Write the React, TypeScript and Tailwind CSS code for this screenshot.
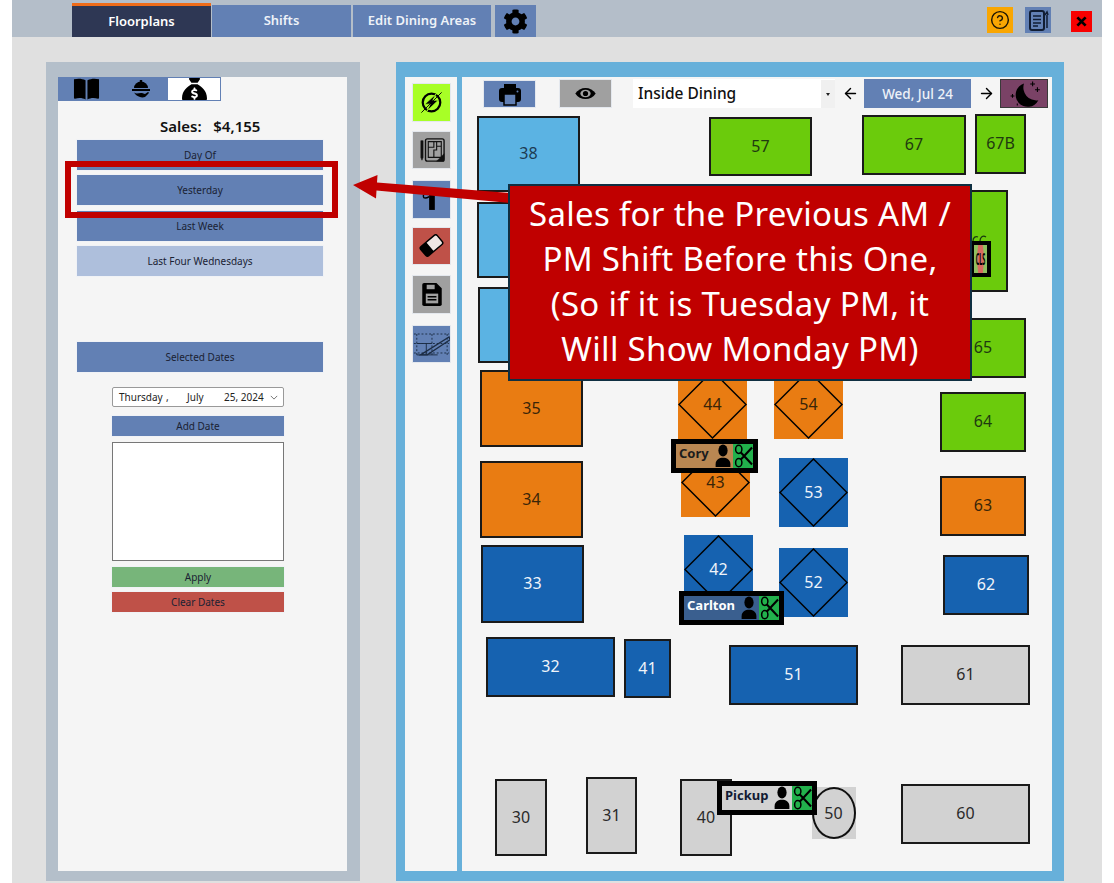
import React from "react";
import { FaCog } from "react-icons/fa";
import { FaSackDollar } from "react-icons/fa6";
import { ArrowLeft, ArrowRight, CircleHelp } from "lucide-react";

type T = { n: string; x: number; y: number; w: number; h: number; k: string; d?: boolean };
const colors: Record<string, string> = {
  sky: "bg-[#5bb3e3] text-[#1d3b52]",
  lime: "bg-[#6bcb0c] text-[#1f3a10]",
  orange: "bg-[#e97c12] text-[#3a2508]",
  blue: "bg-[#1662b0] text-[#f0f4fa]",
  gray: "bg-[#d2d2d2] text-[#2a2a2a]",
};
const tables: T[] = [
  { n: "38", x: 477, y: 116, w: 103, h: 76, k: "sky" },
  { n: "", x: 477, y: 202, w: 103, h: 76, k: "sky" },
  { n: "", x: 478, y: 287, w: 103, h: 76, k: "sky" },
  { n: "35", x: 480, y: 370, w: 103, h: 77, k: "orange" },
  { n: "34", x: 480, y: 461, w: 103, h: 77, k: "orange" },
  { n: "33", x: 481, y: 545, w: 103, h: 78, k: "blue" },
  { n: "32", x: 486, y: 637, w: 129, h: 60, k: "blue" },
  { n: "41", x: 624, y: 639, w: 47, h: 59, k: "blue" },
  { n: "57", x: 709, y: 117, w: 103, h: 59, k: "lime" },
  { n: "67", x: 862, y: 115, w: 104, h: 60, k: "lime" },
  { n: "67B", x: 975, y: 114, w: 51, h: 60, k: "lime" },
  { n: "66", x: 905, y: 190, w: 103, h: 102, k: "lime" },
  { n: "65", x: 940, y: 318, w: 86, h: 60, k: "lime" },
  { n: "64", x: 940, y: 392, w: 86, h: 60, k: "lime" },
  { n: "63", x: 940, y: 476, w: 86, h: 60, k: "orange" },
  { n: "62", x: 943, y: 555, w: 86, h: 60, k: "blue" },
  { n: "61", x: 901, y: 645, w: 129, h: 60, k: "gray" },
  { n: "60", x: 901, y: 784, w: 129, h: 60, k: "gray" },
  { n: "51", x: 729, y: 645, w: 129, h: 60, k: "blue" },
  { n: "30", x: 495, y: 779, w: 52, h: 77, k: "gray" },
  { n: "31", x: 586, y: 777, w: 51, h: 77, k: "gray" },
  { n: "40", x: 680, y: 779, w: 52, h: 77, k: "gray" },
  { n: "44", x: 678, y: 370, w: 69, h: 69, k: "orange", d: true },
  { n: "54", x: 774, y: 370, w: 69, h: 69, k: "orange", d: true },
  { n: "43", x: 681, y: 448, w: 69, h: 69, k: "orange", d: true },
  { n: "53", x: 779, y: 458, w: 69, h: 69, k: "blue", d: true },
  { n: "42", x: 684, y: 535, w: 69, h: 69, k: "blue", d: true },
  { n: "52", x: 779, y: 548, w: 69, h: 69, k: "blue", d: true },
];

function Bolt() {
  return (
    <svg viewBox="0 0 24 24" className="w-[27px] h-[27px]">
      <circle cx="12" cy="12" r="7.800" fill="none" stroke="#000" strokeWidth="2" />
      <path d="M16 4.500 6 13.500h4.800L8 19.500l10-9.500h-4.800z" fill="#000" stroke="#a8ff26" strokeWidth="0.700" />
      <path d="M3 21 21 3" stroke="#000" strokeWidth="0.800" />
    </svg>
  );
}
function Plan() {
  return (
    <svg viewBox="0 0 28 28" className="w-[26px] h-[26px]" fill="none" stroke="#111">
      <path d="M2 4v18l1.200 3 1.200-3V4z" fill="#111" strokeWidth="0.600" />
      <rect x="7" y="2" width="20" height="24" rx="2" strokeWidth="1.500" />
      <path d="M10 5h14v17H10zM16 5v6h-6M19 5v5h5M19 10v4h-3v8" strokeWidth="1.200" />
      <path d="M27 18v8h-8z" fill="#111" strokeWidth="0.500" />
    </svg>
  );
}
function Tie() {
  return (
    <svg viewBox="0 0 39 38" className="w-[37px] h-[37px]">
      <path d="M17 8h6v22h-6z" fill="#000" />
      <path d="M11 14v2c0 2 3 2 6 0" fill="none" stroke="#000" strokeWidth="1.500" />
    </svg>
  );
}
function Eraser() {
  return (
    <svg viewBox="0 0 28 24" className="w-[27px] h-[23px]">
      <g transform="rotate(-40 14 12)">
        <rect x="2" y="5" width="24" height="14" rx="3" fill="#000" />
        <path d="M12 6.500h11a1.500 1.500 0 0 1 1.500 1.500v8a1.500 1.500 0 0 1-1.500 1.500H12z" fill="#f0e6e4" />
      </g>
    </svg>
  );
}
function Floppy() {
  return (
    <svg viewBox="0 0 22 26" className="w-[20px] h-[23px]">
      <path d="M2 0h14l6 6v18a2 2 0 0 1-2 2H2a2 2 0 0 1-2-2V2a2 2 0 0 1 2-2z" fill="#000" />
      <rect x="5" y="2" width="9" height="5" fill="#a0a0a0" />
      <rect x="4" y="12" width="14" height="11" fill="#a0a0a0" />
      <path d="M6 15.500h10M6 19h10" stroke="#000" strokeWidth="1.800" />
    </svg>
  );
}
function Draw() {
  return (
    <svg viewBox="0 0 39 38" className="w-[37px] h-[37px]" fill="none" stroke="#1c2c44">
      <path d="M1 9h37M1 19h37M1 29h37M4 9v22M20 9v22M36 9v22" strokeWidth="1" strokeDasharray="2 2" />
      <path d="M4 19h16M4 31h22M14 19v12" strokeWidth="1" />
      <path d="M8 31 38 12l1 3-24 16z" strokeWidth="1.300" />
    </svg>
  );
}
function Notes() {
  return (
    <svg viewBox="0 0 24 24" className="w-[24px] h-[24px]" fill="none" stroke="#111d33">
      <rect x="4" y="3" width="14" height="19" rx="2" strokeWidth="2" />
      <path d="M7 8h8M7 11.500h8M7 15h8M7 18h5" strokeWidth="1.500" />
      <path d="M21 7v13M19 7l2-3 1 3" strokeWidth="1.500" />
    </svg>
  );
}
function Moon() {
  return (
    <svg viewBox="0 0 48 28" className="w-[48px] h-[28px]">
      <path d="M24 3a12.500 12.500 0 1 0 15 17.500A13.500 13.500 0 0 1 24 3z" fill="#000" />
      <path d="M33 1v5M30.500 3.500h5M38 7v5M35.500 9.500h5M12 14v4M10 16h4M17 24v2" stroke="#000" strokeWidth="1.100" />
    </svg>
  );
}
function Printer() {
  return (
    <svg viewBox="0 0 24 24" className="w-[24px] h-[24px]">
      <path d="M6 2h12v5H6z" fill="#000" />
      <path d="M4 6h16a3 3 0 0 1 3 3v8a3 3 0 0 1-3 3H4a3 3 0 0 1-3-3V9a3 3 0 0 1 3-3z" fill="#000" />
      <rect x="6" y="12" width="12" height="11" fill="#6280b4" stroke="#000" strokeWidth="1.500" />
      <circle cx="19.500" cy="9.500" r="1" fill="#6280b4" />
    </svg>
  );
}
function Eye() {
  return (
    <svg viewBox="0 0 24 14" className="w-[23px] h-[13px]">
      <path d="M1 7c5-8 17-8 22 0-5 8-17 8-22 0z" fill="#000" />
      <ellipse cx="12" cy="7" rx="5.500" ry="4" fill="#a0a0a0" />
      <circle cx="12" cy="7" r="2.800" fill="#000" />
    </svg>
  );
}
function Book() {
  return (
    <svg viewBox="0 0 28 24" className="w-[27px] h-[24px]">
      <path d="M1 2c4-1 8-1 12 1v20c-3-2-7-2-11-1a1 1 0 0 1-1-1z" fill="#000" />
      <path d="M27 2c-4-1-8-1-12 1v20c3-2 7-2 11-1a1 1 0 0 0 1-1z" fill="#000" />
    </svg>
  );
}
function Cloche() {
  return (
    <svg viewBox="0 0 20 20" className="w-[20px] h-[20px]">
      <path d="M3 9a7 6.500 0 0 1 14 0z" fill="#000" />
      <rect x="8.800" y="1" width="2.400" height="2" fill="#000" />
      <rect x="1" y="10" width="18" height="2" fill="#000" />
      <path d="M3 13.500c3 2 5 0 8 .5l3 1 3-2c1 0 1 1 .5 1.500L14 18c-3 1-6 0-9-2z" fill="#000" />
    </svg>
  );
}
function Person() {
  return (
    <svg viewBox="0 0 16 26" className="w-[16px] h-[24px]">
      <ellipse cx="8" cy="7" rx="5" ry="6.500" fill="#000" />
      <path d="M0 25v-3c0-5 4-7 8-7s8 2 8 7v3z" fill="#000" />
    </svg>
  );
}
function Scissors() {
  return (
    <svg viewBox="0 0 20 26" className="w-[19px] h-[26px]" fill="none" stroke="#000">
      <ellipse cx="5" cy="6" rx="3.300" ry="4.300" strokeWidth="1.600" />
      <ellipse cx="5" cy="20" rx="3.300" ry="4.300" strokeWidth="1.600" />
      <path d="M7 9l12 13M7 17 19 4" strokeWidth="2.200" />
    </svg>
  );
}

function SideBtn({ c, children, mt }: { c: string; children: React.ReactNode; mt: string }) {
  return <div className={`w-[39px] h-[38.500px] flex items-center justify-center border border-[#e4e8ee] ${c} ${mt}`}>{children}</div>;
}

function Tag({ name, x, y, bg, fg }: { name: string; x: number; y: number; bg: string; fg: string }) {
  return (
    <div
      className={`absolute flex h-[34px] border-[5px] border-black ${bg}`}
      style={{ left: x, top: y, width: name === "Carlton" ? 105 : name === "Pickup" ? 100 : 87 }}
    >
      <span className={`flex-1 pl-[3px] text-[13px] font-bold leading-[19px] ${fg}`}>{name}</span>
      <span className="w-[20px] flex items-center justify-center"><Person /></span>
      <span className="w-[20px] bg-[#22b14c] flex items-center justify-center overflow-hidden"><Scissors /></span>
    </div>
  );
}

const big = "w-[248px] h-[32px] flex items-center justify-center text-[10px] text-[#1a2233] border border-[#f0f2f6]";
const small = "w-[174px] h-[22px] flex items-center justify-center text-[10px] text-[#1a2233] border border-[#f0f2f6]";

export default function App() {
  return (
    <div className="relative w-[1114px] h-[883px] bg-white px-3 flex flex-col overflow-hidden font-['Noto_Sans','Open_Sans',sans-serif]">
      <header className="h-[37px] shrink-0 bg-[#b4bec9] flex items-end pl-[60px]">
        <div className="w-[139px] h-[34px] bg-[#2e3754] border-t-[3px] border-[#ef6c1a] text-white text-[13px] font-semibold flex items-center justify-center">Floorplans</div>
        <div className="ml-[1px] w-[139px] h-[32px] bg-[#6280b4] text-[#eef2f8] text-[13px] font-semibold flex items-center justify-center">Shifts</div>
        <div className="ml-[2px] w-[138px] h-[32px] bg-[#6280b4] text-[#eef2f8] text-[13px] font-semibold flex items-center justify-center">Edit Dining Areas</div>
        <div className="ml-[4px] w-[41px] h-[32px] bg-[#6280b4] flex items-center justify-center"><FaCog className="text-[25px] text-black" /></div>
        <div className="ml-[451px] mb-[4px] w-[26px] h-[26px] bg-[#f9a602] flex items-center justify-center"><CircleHelp className="w-[20px] h-[20px] text-[#1a1405]" strokeWidth={1.7} /></div>
        <div className="ml-[12px] mb-[4px] w-[26px] h-[26px] bg-[#6280b4] flex items-center justify-center"><Notes /></div>
        <div className="ml-[20px] mb-[5px] w-[21px] h-[21px] bg-[#f80000] flex items-center justify-center">
          <svg viewBox="0 0 12 12" className="w-[11px] h-[11px]" stroke="#000" strokeWidth="3"><path d="M1.500 1.500l9 9M10.500 1.500l-9 9" /></svg>
        </div>
      </header>

      <main className="flex-1 bg-[#e0e0e0] pl-[34px] pt-[25px] flex gap-[36px]">
        <section className="w-[314px] h-[819px] bg-[#b4bfca] pl-[12px] pt-[15px]">
          <div className="w-[289px] h-[794px] bg-[#f5f5f5] flex flex-col">
            <div className="flex h-[24px] w-[163px] border border-[#6280b4] bg-[#6280b4] overflow-hidden">
              <span className="w-[54px] flex justify-center items-center"><Book /></span>
              <span className="w-[55px] flex justify-center items-center"><Cloche /></span>
              <span className="w-[52px] bg-white flex justify-center"><FaSackDollar className="text-[25px] text-black" /></span>
            </div>
            <div className="mt-[15px] h-[23px] pl-[102px] text-[15px] font-semibold text-[#111] leading-[21px] whitespace-pre">Sales:   $4,155</div>
            <div className="pl-[18px] flex flex-col">
              <div className={`${big} bg-[#6280b4]`}>Day Of</div>
              <div className={`${big} bg-[#6280b4] mt-[3px]`}>Yesterday</div>
              <div className={`${big} bg-[#6280b4] mt-[4px]`}>Last Week</div>
              <div className={`${big} bg-[#aebfdc] mt-[3px]`}>Last Four Wednesdays</div>
              <div className={`${big} bg-[#6280b4] mt-[64px]`}>Selected Dates</div>
            </div>
            <div className="pl-[53px] flex flex-col">
              <div className="ml-[1px] mt-[14px] w-[172px] h-[20px] bg-white border border-[#999] rounded-[2px] flex items-center pl-[6px] text-[10px] text-[#222] whitespace-pre">
                <span className="w-[47px]">Thursday</span><span className="w-[21px]">,</span><span className="w-[37px]">July</span><span>25, 2024</span>
                <svg viewBox="0 0 10 6" className="w-[8px] h-[5px] ml-[6px]" fill="none" stroke="#555"><path d="M1 1l4 4 4-4" /></svg>
              </div>
              <div className={`${small} bg-[#6280b4] mt-[8px]`}>Add Date</div>
              <div className="ml-[1px] mt-[5px] w-[172px] h-[119px] bg-white border border-[#777]" />
              <div className={`${small} bg-[#77b57a] mt-[5px]`}>Apply</div>
              <div className={`${small} bg-[#bf5148] mt-[3px]`}>Clear Dates</div>
            </div>
          </div>
        </section>

        <section className="w-[668px] h-[819px] bg-[#67b0da] pl-[9px] pt-[15px] flex gap-[5px]">
          <div className="w-[52px] h-[794px] bg-[#f5f5f5] pl-[7px] pt-[6px] flex flex-col">
            <SideBtn c="bg-[#a8ff26]" mt=""><Bolt /></SideBtn>
            <SideBtn c="bg-[#a0a0a0]" mt="mt-[9px]"><Plan /></SideBtn>
            <SideBtn c="bg-[#6280b4]" mt="mt-[11px]"><Tie /></SideBtn>
            <SideBtn c="bg-[#bf5148]" mt="mt-[8px]"><Eraser /></SideBtn>
            <SideBtn c="bg-[#a0a0a0]" mt="mt-[10px]"><Floppy /></SideBtn>
            <SideBtn c="bg-[#6280b4]" mt="mt-[11px]"><Draw /></SideBtn>
          </div>
          <div className="w-[590px] h-[794px] bg-[#f5f5f5] flex items-start pt-[2px]">
            <div className="ml-[21px] mt-[1px] w-[53px] h-[28px] bg-[#6280b4] border border-[#e4e8ee] flex items-center justify-center"><Printer /></div>
            <div className="ml-[23px] w-[53px] h-[29px] bg-[#a0a0a0] border border-[#e4e8ee] flex items-center justify-center"><Eye /></div>
            <div className="ml-[21px] w-[202px] h-[29px] bg-white flex items-center text-[15.500px] text-[#111] pl-[5px] pt-[1px]">
              <span className="flex-1 font-medium">Inside Dining</span>
              <span className="w-[14px] h-[28px] bg-[#f0f0f0] flex items-center justify-center"><span className="border-x-[2.500px] border-t-[3px] border-x-transparent border-t-[#222]" /></span>
            </div>
            <ArrowLeft className="ml-[7px] mt-[6px] w-[17px] h-[17px] text-black" strokeWidth={2} />
            <div className="ml-[5px] w-[107px] h-[29px] pt-[1px] bg-[#6280b4] text-[#eef2f8] text-[13.500px] font-medium flex items-center justify-center">Wed, Jul 24</div>
            <ArrowRight className="ml-[7px] mt-[6px] w-[17px] h-[17px] text-black" strokeWidth={2} />
            <div className="ml-[5px] w-[48px] h-[29px] bg-[#7a4266] border border-[#3a3a3a] flex items-center justify-center overflow-hidden"><Moon /></div>
          </div>
        </section>
      </main>

      {tables.map((t) => (
        <div
          key={t.n + t.x + t.y}
          className={`absolute flex items-center justify-center text-[16px] ${colors[t.k]} ${t.d ? "" : "border-2 border-[#1a1a1a]"}`}
          style={{ left: t.x, top: t.y, width: t.w, height: t.h }}
        >
          {t.d && (
            <svg viewBox="0 0 69 69" className="absolute inset-0 w-full h-full" fill="none" stroke="#000" strokeWidth="1.500">
              <path d="M34.500 1 68 34.500 34.500 68 1 34.500z" />
            </svg>
          )}
          <span className="relative -mt-[2px]">{t.n}</span>
        </div>
      ))}

      <div className="absolute left-[812px] top-[787px] w-[44px] h-[52px] bg-[#d2d2d2] flex items-center justify-center">
        <div className="w-[44px] h-[52px] rounded-[50%] border-2 border-[#111] flex items-center justify-center text-[16px] text-[#2a2a2a] -ml-[1px] shrink-0">50</div>
      </div>

      <div className="absolute left-[970px] top-[241px] w-[21px] h-[36px] border-[4px] border-black bg-[#8fbf60] flex items-center justify-center overflow-hidden">
        <span className="w-[13px] h-[26px] rounded-[50%] bg-[#d96a60] text-[11px] font-bold text-black flex items-center justify-center scale-x-50 scale-y-150">CLS</span>
      </div>
      <svg className="absolute left-[972px] top-[234px] w-[16px] h-[7px]" viewBox="0 0 16 7" fill="none" stroke="#1a3a10" strokeWidth="1.300">
        <path d="M1 7c0-4 3-5 5-4M8 7c0-4 3-6 6-4" />
      </svg>

      <Tag name="Cory" x={671} y={439} bg="bg-[#b98752]" fg="text-[#1c1c1c]" />
      <Tag name="Carlton" x={679} y={591} bg="bg-[#3a5f8f]" fg="text-white" />
      <Tag name="Pickup" x={717} y={781} bg="bg-[#d2d2d2]" fg="text-[#111a33]" />

      <div className="absolute left-[65px] top-[161px] w-[273px] h-[57px] border-[6px] border-[#c00000]" />

      <svg className="absolute left-[350px] top-[170px] w-[165px] h-[35px]" viewBox="0 0 165 35">
        <path d="M3 15 27.500 5 27 12.500 160 23 160 33 26.500 20.500 26 28.500z" fill="#c00000" />
      </svg>

      <div className="absolute left-[508px] top-[184px] w-[464px] h-[197px] bg-[#c00000] border-2 border-[#0f2f42] flex items-center justify-center text-center text-white text-[33px] tracking-[0.3px] leading-[45px] pb-[3px]">
        <div>
          Sales for the Previous AM /<br />
          PM Shift Before this One,<br />
          (So if it is Tuesday PM, it<br />
          Will Show Monday PM)
        </div>
      </div>
    </div>
  );
}
